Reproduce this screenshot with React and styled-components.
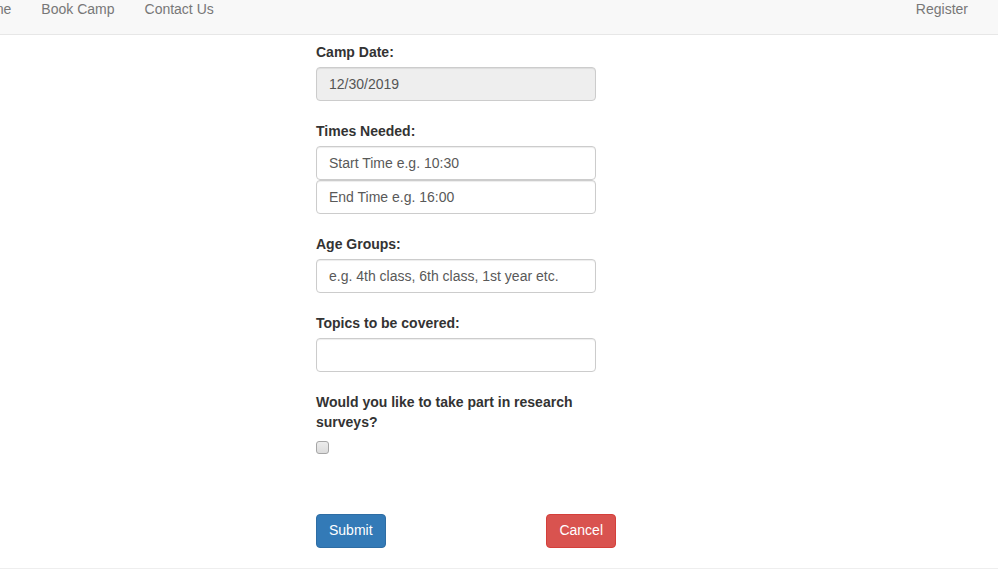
import React from 'react';
import styled, { createGlobalStyle } from 'styled-components';

const GlobalStyle = createGlobalStyle`
  html, body {
    margin: 0;
    padding: 0;
    background: #fff;
  }
  body {
    font-family: "Liberation Sans", Arial, Helvetica, sans-serif;
    font-size: 14px;
    line-height: 1.42857;
    color: #333;
    overflow: hidden;
  }
  * { box-sizing: border-box; }
`;

const Navbar = styled.nav`
  height: 35px;
  background: #f8f8f8;
  border-bottom: 1px solid #e7e7e7;
  display: flex;
  justify-content: space-between;
  padding-right: 15px;
  overflow: hidden;
`;

const NavList = styled.ul`
  list-style: none;
  margin: 0 0 0 ${p => p.$offset || 0}px;
  padding: 0;
  display: flex;
`;

const NavLink = styled.a`
  display: block;
  padding: 0 15px;
  line-height: 18px;
  color: #777;
  text-decoration: none;
  white-space: nowrap;
`;

const Main = styled.main`
  padding: 7px 0 0 316px;
`;

const Form = styled.form`
  width: 280px;
`;

const Group = styled.div`
  margin-bottom: 20px;
`;

const Label = styled.label`
  display: block;
  padding-top: 1px;
  margin-bottom: 4px;
  font-weight: bold;
`;

const Input = styled.input`
  display: block;
  width: 100%;
  height: 34px;
  padding: 6px 12px;
  font-family: inherit;
  font-size: 14px;
  line-height: 1.42857;
  color: #555;
  background: ${p => (p.disabled ? '#eee' : '#fff')};
  border: 1px solid #ccc;
  border-radius: 4px;
  box-shadow: inset 0 1px 1px rgba(0, 0, 0, 0.075);
  outline: none;
  &::placeholder {
    color: #595959;
    opacity: 1;
  }
`;

const Checkbox = styled.input`
  appearance: none;
  display: block;
  margin: 8px 0 0;
  width: 13px;
  height: 13px;
  border: 1px solid #a6a6a6;
  border-radius: 3px;
  background: linear-gradient(#ececec, #dcdcdc);
`;

const Actions = styled.div`
  width: 300px;
  margin-top: 60px;
  display: flex;
  justify-content: space-between;
`;

const Button = styled.button`
  height: 34px;
  padding: 6px 12px;
  font-family: inherit;
  font-size: 14px;
  line-height: 1.42857;
  color: #fff;
  background: ${p => (p.$danger ? '#d9534f' : '#337ab7')};
  border: 1px solid ${p => (p.$danger ? '#d43f3a' : '#2e6da4')};
  border-radius: 4px;
  cursor: pointer;
`;

const Rule = styled.hr`
  margin: 20px 0 0;
  border: 0;
  border-top: 1px solid #eee;
`;

export default function App() {
  return (
    <>
      <GlobalStyle />
      <Navbar>
        <NavList $offset={-41}>
          <li><NavLink href="#">Home</NavLink></li>
          <li><NavLink href="#">Book Camp</NavLink></li>
          <li><NavLink href="#">Contact Us</NavLink></li>
        </NavList>
        <NavList>
          <li><NavLink href="#">Register</NavLink></li>
        </NavList>
      </Navbar>
      <Main>
        <Form onSubmit={e => e.preventDefault()}>
          <Group>
            <Label>Camp Date:</Label>
            <Input disabled defaultValue="12/30/2019" />
          </Group>
          <Group>
            <Label>Times Needed:</Label>
            <Input placeholder="Start Time e.g. 10:30" />
            <Input placeholder="End Time e.g. 16:00" />
          </Group>
          <Group>
            <Label>Age Groups:</Label>
            <Input placeholder="e.g. 4th class, 6th class, 1st year etc." />
          </Group>
          <Group>
            <Label>Topics to be covered:</Label>
            <Input />
          </Group>
          <div>
            <Label>Would you like to take part in research surveys?</Label>
            <Checkbox type="checkbox" />
          </div>
          <Actions>
            <Button type="submit">Submit</Button>
            <Button type="button" $danger>Cancel</Button>
          </Actions>
        </Form>
      </Main>
      <Rule />
    </>
  );
}
